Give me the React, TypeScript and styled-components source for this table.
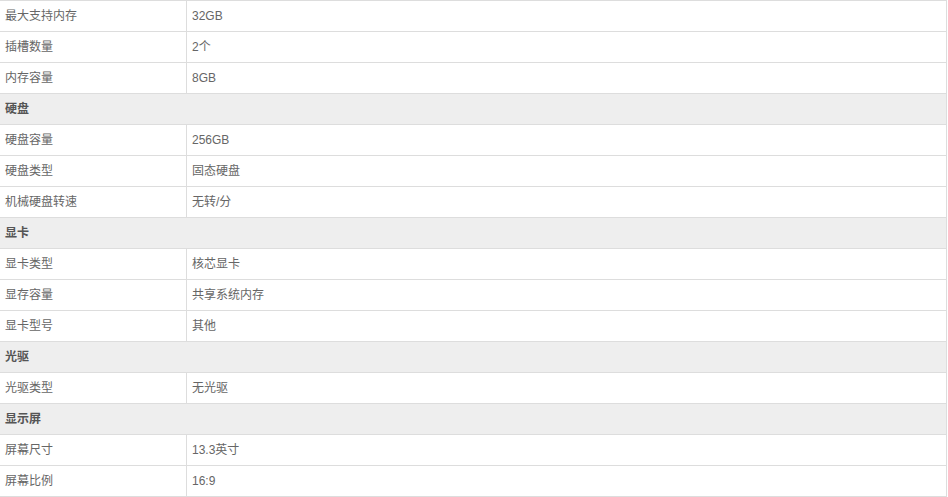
import React from 'react'
import styled, { createGlobalStyle } from 'styled-components'

const GlobalStyle = createGlobalStyle`
  html, body {
    margin: 0;
    padding: 0;
    background: #fff;
  }
  body {
    font-family: "Liberation Sans", "Noto Sans CJK SC", sans-serif;
    font-size: 12px;
  }
`

const SpecTable = styled.div`
  width: 947px;
  border-top: 1px solid #ddd;
  border-right: 1px solid #ddd;
  box-sizing: border-box;
`

const Row = styled.div`
  display: grid;
  grid-template-columns: 187px 1fr;
  height: 31px;
  border-bottom: 1px solid #ddd;
  box-sizing: border-box;
`

const Label = styled.div`
  padding-left: 5px;
  border-right: 1px solid #ddd;
  line-height: 30px;
  color: #666;
`

const Value = styled.div`
  padding-left: 5px;
  line-height: 30px;
  color: #666;
`

const GroupRow = styled.div`
  height: 31px;
  padding-left: 5px;
  line-height: 30px;
  background: #eee;
  border-bottom: 1px solid #ddd;
  box-sizing: border-box;
  color: #555;
  font-weight: bold;
`

type Item = { group: string } | { label: string; value: string }

const specs: Item[] = [
  { label: '最大支持内存', value: '32GB' },
  { label: '插槽数量', value: '2个' },
  { label: '内存容量', value: '8GB' },
  { group: '硬盘' },
  { label: '硬盘容量', value: '256GB' },
  { label: '硬盘类型', value: '固态硬盘' },
  { label: '机械硬盘转速', value: '无转/分' },
  { group: '显卡' },
  { label: '显卡类型', value: '核芯显卡' },
  { label: '显存容量', value: '共享系统内存' },
  { label: '显卡型号', value: '其他' },
  { group: '光驱' },
  { label: '光驱类型', value: '无光驱' },
  { group: '显示屏' },
  { label: '屏幕尺寸', value: '13.3英寸' },
  { label: '屏幕比例', value: '16:9' },
]

export default function App() {
  return (
    <>
      <GlobalStyle />
      <SpecTable>
        {specs.map((item, i) =>
          'group' in item ? (
            <GroupRow key={i}>{item.group}</GroupRow>
          ) : (
            <Row key={i}>
              <Label>{item.label}</Label>
              <Value>{item.value}</Value>
            </Row>
          ),
        )}
      </SpecTable>
    </>
  )
}
